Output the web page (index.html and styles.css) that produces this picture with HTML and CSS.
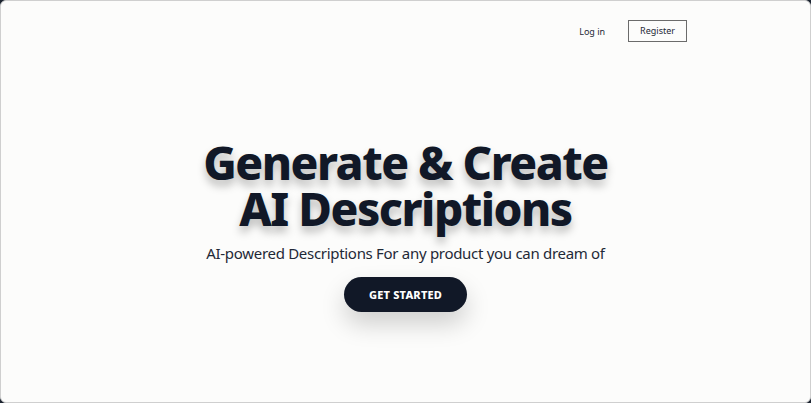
FILE: index.html
```html
<!DOCTYPE html>
<html lang="en">
<head>
<meta charset="utf-8">
<title>AI Descriptions</title>
<link rel="stylesheet" href="styles.css">
</head>
<body>
<div class="frame">
  <nav class="nav">
    <a class="nav-link" href="#">Log in</a>
    <a class="nav-btn" href="#">Register</a>
  </nav>
  <main class="hero">
    <h1 class="title">Generate &amp; Create<br>AI Descriptions</h1>
    <p class="subtitle">AI-powered Descriptions For any product you can dream of</p>
    <a class="cta" href="#">GET STARTED</a>
  </main>
</div>
</body>
</html>
```
FILE: styles.css
```css
html, body {
  margin: 0;
  padding: 0;
  height: 100%;
  background: #1c2430;
}
.frame {
  box-sizing: border-box;
  height: 403px;
  background: #fcfcfb;
  border: 1px solid #cfcfcf;
  border-radius: 6px;
  font-family: "Noto Sans", "Open Sans", sans-serif;
  display: flex;
  flex-direction: column;
  overflow: hidden;
}
.nav {
  display: flex;
  justify-content: flex-end;
  align-items: center;
  gap: 23px;
  padding: 19px 123px 0 0;
}
.nav a {
  text-decoration: none;
  color: #1f2937;
  font-size: 9px;
}
.nav-btn {
  border: 1px solid #6b6b6b;
  padding: 3px 11px;
  line-height: 14px;
}
.hero {
  display: flex;
  flex-direction: column;
  align-items: center;
  margin-top: 97px;
}
.title {
  margin: 0;
  text-align: center;
  font-size: 46px;
  line-height: 46px;
  font-weight: 800;
  letter-spacing: -1.5px;
  color: #111827;
  text-shadow: 0 6px 8px rgba(0, 0, 0, 0.25);
}
.subtitle {
  margin: 12px 0 0;
  font-size: 15px;
  letter-spacing: -0.3px;
  color: #1f2937;
}
.cta {
  margin-top: 14px;
  display: inline-block;
  background: #111827;
  color: #fff;
  text-decoration: none;
  font-size: 11px;
  font-weight: 800;
  letter-spacing: 0.2px;
  padding: 10px 25px;
  line-height: 15px;
  border-radius: 999px;
  box-shadow: 0 12px 24px rgba(0, 0, 0, 0.18);
}
```
